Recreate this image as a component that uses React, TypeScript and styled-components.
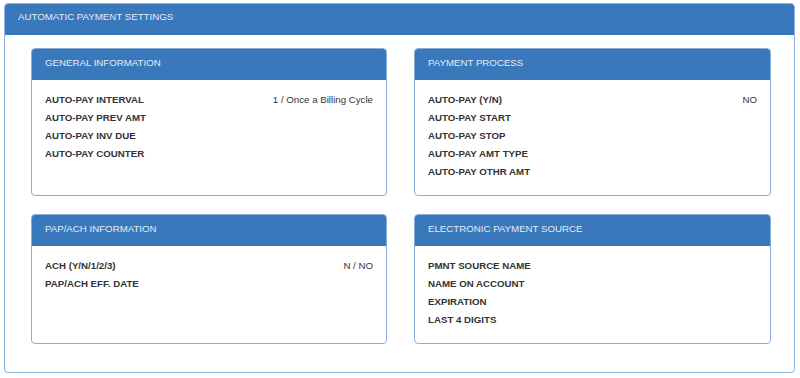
import React from 'react'
import styled, { createGlobalStyle } from 'styled-components'

type Field = { label: string; value?: string }
type Section = { title: string; fields: Field[] }

const sections: Section[] = [
    {
        title: 'GENERAL INFORMATION',
        fields: [
            { label: 'AUTO-PAY INTERVAL', value: '1 / Once a Billing Cycle' },
            { label: 'AUTO-PAY PREV AMT' },
            { label: 'AUTO-PAY INV DUE' },
            { label: 'AUTO-PAY COUNTER' },
        ],
    },
    {
        title: 'PAYMENT PROCESS',
        fields: [
            { label: 'AUTO-PAY (Y/N)', value: 'NO' },
            { label: 'AUTO-PAY START' },
            { label: 'AUTO-PAY STOP' },
            { label: 'AUTO-PAY AMT TYPE' },
            { label: 'AUTO-PAY OTHR AMT' },
        ],
    },
    {
        title: 'PAP/ACH INFORMATION',
        fields: [
            { label: 'ACH (Y/N/1/2/3)', value: 'N / NO' },
            { label: 'PAP/ACH EFF. DATE' },
        ],
    },
    {
        title: 'ELECTRONIC PAYMENT SOURCE',
        fields: [
            { label: 'PMNT SOURCE NAME' },
            { label: 'NAME ON ACCOUNT' },
            { label: 'EXPIRATION' },
            { label: 'LAST 4 DIGITS' },
        ],
    },
]

export default function App() {
    return (
        <>
            <GlobalStyle />
            <Page>
                <Panel>
                    <PanelHeading>AUTOMATIC PAYMENT SETTINGS</PanelHeading>
                    <PanelBody>
                        {sections.map(section => (
                            <Card key={section.title}>
                                <CardHeading>{section.title}</CardHeading>
                                <CardBody>
                                    {section.fields.map(field => (
                                        <FieldRow key={field.label}>
                                            <FieldLabel>{field.label}</FieldLabel>
                                            {field.value && <FieldValue>{field.value}</FieldValue>}
                                        </FieldRow>
                                    ))}
                                </CardBody>
                            </Card>
                        ))}
                    </PanelBody>
                </Panel>
            </Page>
        </>
    )
}

const GlobalStyle = createGlobalStyle`
    body {
        margin: 0;
        background: #ffffff;
        font-family: "Liberation Sans", Arial, sans-serif;
    }
`

const Page = styled.div`
    padding: 3px 5px 4px 4px;
`

const Panel = styled.div`
    width: 791px;
    box-sizing: border-box;
    border: 1px solid #8db3de;
    border-radius: 4px;
    overflow: hidden;
`

const PanelHeading = styled.div`
    height: 31px;
    box-sizing: border-box;
    padding: 6px 13px 0;
    background: #3a78bc;
    color: #e4ecf6;
    font-size: 9.7px;
    line-height: 14px;
`

const PanelBody = styled.div`
    display: grid;
    grid-template-columns: 356px 357px;
    column-gap: 27px;
    row-gap: 18px;
    padding: 13px 23px 28px 26px;
`

const Card = styled.div`
    border: 1px solid #86aedb;
    border-radius: 4px;
    overflow: hidden;
`

const CardHeading = styled.div`
    height: 31px;
    box-sizing: border-box;
    padding: 7px 13px 0;
    background: #3a78bc;
    color: #e4ecf6;
    font-size: 9.7px;
    line-height: 14px;
`

const CardBody = styled.div`
    padding: 11px 13px 14px;
`

const FieldRow = styled.div`
    display: flex;
    justify-content: space-between;
    height: 18px;
    line-height: 18px;
    font-size: 9.7px;
    color: #333333;
`

const FieldLabel = styled.span`
    font-weight: bold;
`

const FieldValue = styled.span``
